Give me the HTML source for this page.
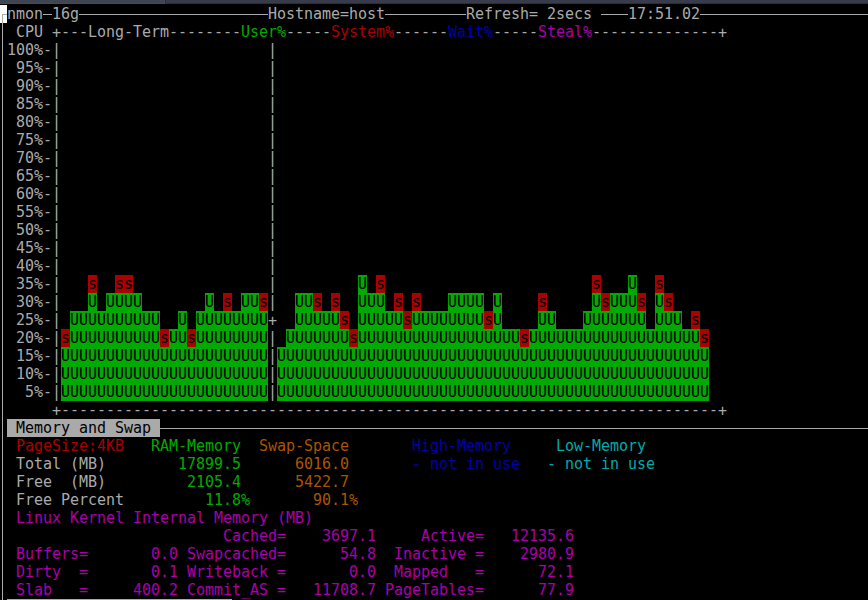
<!DOCTYPE html>
<html><head><meta charset="utf-8"><title>nmon</title>
<style>
html,body{margin:0;padding:0;background:#000;}
body{width:868px;height:600px;position:relative;overflow:hidden;
font-family:"DejaVu Sans Mono","Liberation Mono",monospace;font-size:15px;line-height:18px;}
.t{position:absolute;white-space:pre;height:18px;letter-spacing:-0.031px;display:block;}
i{position:absolute;display:block;}
b{font-weight:normal;position:relative;top:1px;}
</style></head><body>
<i style="left:0px;top:0px;width:165px;height:4px;background:#404552"></i>
<i style="left:0px;top:3px;width:165px;height:1px;background:#454a59"></i>
<i style="left:164px;top:0px;width:1px;height:4px;background:#454a59"></i>
<i style="left:165px;top:0px;width:1px;height:4px;background:#2b2e39"></i>
<i style="left:166px;top:0px;width:702px;height:3px;background:#383c4a"></i>
<i style="left:166px;top:3px;width:702px;height:1px;background:#2b2e39"></i>
<i style="left:0px;top:5px;width:7px;height:18px;background:#ffffff"></i>
<i style="left:2px;top:14px;width:1px;height:586px;background:#aaaaaa"></i>
<i style="left:2px;top:14px;width:5px;height:1px;background:#aaaaaa"></i>
<span class="t" style="left:7px;top:5px;color:#aaaaaa;">nmon</span>
<i style="left:43px;top:14px;width:9px;height:1px;background:#aaaaaa"></i>
<span class="t" style="left:52px;top:5px;color:#aaaaaa;">16g</span>
<i style="left:79px;top:14px;width:189px;height:1px;background:#aaaaaa"></i>
<span class="t" style="left:268px;top:5px;color:#aaaaaa;">Hostname=host</span>
<i style="left:385px;top:14px;width:81px;height:1px;background:#aaaaaa"></i>
<span class="t" style="left:466px;top:5px;color:#aaaaaa;">Refresh= 2secs</span>
<i style="left:601px;top:14px;width:27px;height:1px;background:#aaaaaa"></i>
<span class="t" style="left:628px;top:5px;color:#aaaaaa;">17:51.02</span>
<i style="left:700px;top:14px;width:171px;height:1px;background:#aaaaaa"></i>
<span class="t" style="left:16px;top:23px;color:#aaaaaa;">CPU <b>+</b>---Long-Term--------</span>
<span class="t" style="left:241px;top:23px;color:#00aa00;">User%</span>
<span class="t" style="left:286px;top:23px;color:#aaaaaa;">-----</span>
<span class="t" style="left:331px;top:23px;color:#aa0000;">System%</span>
<span class="t" style="left:394px;top:23px;color:#aaaaaa;">------</span>
<span class="t" style="left:448px;top:23px;color:#0000aa;">Wait%</span>
<span class="t" style="left:493px;top:23px;color:#aaaaaa;">-----</span>
<span class="t" style="left:538px;top:23px;color:#aa00aa;">Steal%</span>
<span class="t" style="left:592px;top:23px;color:#aaaaaa;">--------------<b>+</b></span>
<span class="t" style="left:7px;top:41px;color:#aaaaaa;">100%-|</span>
<span class="t" style="left:268px;top:41px;color:#aaaaaa;">|</span>
<span class="t" style="left:7px;top:59px;color:#aaaaaa;"> 95%-|</span>
<span class="t" style="left:268px;top:59px;color:#aaaaaa;">|</span>
<span class="t" style="left:7px;top:77px;color:#aaaaaa;"> 90%-|</span>
<span class="t" style="left:268px;top:77px;color:#aaaaaa;">|</span>
<span class="t" style="left:7px;top:95px;color:#aaaaaa;"> 85%-|</span>
<span class="t" style="left:268px;top:95px;color:#aaaaaa;">|</span>
<span class="t" style="left:7px;top:113px;color:#aaaaaa;"> 80%-|</span>
<span class="t" style="left:268px;top:113px;color:#aaaaaa;">|</span>
<span class="t" style="left:7px;top:131px;color:#aaaaaa;"> 75%-|</span>
<span class="t" style="left:268px;top:131px;color:#aaaaaa;">|</span>
<span class="t" style="left:7px;top:149px;color:#aaaaaa;"> 70%-|</span>
<span class="t" style="left:268px;top:149px;color:#aaaaaa;">|</span>
<span class="t" style="left:7px;top:167px;color:#aaaaaa;"> 65%-|</span>
<span class="t" style="left:268px;top:167px;color:#aaaaaa;">|</span>
<span class="t" style="left:7px;top:185px;color:#aaaaaa;"> 60%-|</span>
<span class="t" style="left:268px;top:185px;color:#aaaaaa;">|</span>
<span class="t" style="left:7px;top:203px;color:#aaaaaa;"> 55%-|</span>
<span class="t" style="left:268px;top:203px;color:#aaaaaa;">|</span>
<span class="t" style="left:7px;top:221px;color:#aaaaaa;"> 50%-|</span>
<span class="t" style="left:268px;top:221px;color:#aaaaaa;">|</span>
<span class="t" style="left:7px;top:239px;color:#aaaaaa;"> 45%-|</span>
<span class="t" style="left:268px;top:239px;color:#aaaaaa;">|</span>
<span class="t" style="left:7px;top:257px;color:#aaaaaa;"> 40%-|</span>
<span class="t" style="left:268px;top:257px;color:#aaaaaa;">|</span>
<span class="t" style="left:7px;top:275px;color:#aaaaaa;"> 35%-|</span>
<span class="t" style="left:268px;top:275px;color:#aaaaaa;">|</span>
<span class="t" style="left:88px;top:275px;color:#000;background:#aa0000;width:9px;">s</span>
<span class="t" style="left:115px;top:275px;color:#000;background:#aa0000;width:18px;">ss</span>
<span class="t" style="left:358px;top:275px;color:#000;background:#00aa00;width:9px;">U</span>
<span class="t" style="left:376px;top:275px;color:#000;background:#aa0000;width:9px;">s</span>
<span class="t" style="left:592px;top:275px;color:#000;background:#aa0000;width:9px;">s</span>
<span class="t" style="left:628px;top:275px;color:#000;background:#00aa00;width:9px;">U</span>
<span class="t" style="left:655px;top:275px;color:#000;background:#aa0000;width:9px;">s</span>
<span class="t" style="left:7px;top:293px;color:#aaaaaa;"> 30%-|</span>
<span class="t" style="left:268px;top:293px;color:#aaaaaa;">|</span>
<span class="t" style="left:88px;top:293px;color:#000;background:#00aa00;width:9px;">U</span>
<span class="t" style="left:106px;top:293px;color:#000;background:#00aa00;width:36px;">UUUU</span>
<span class="t" style="left:205px;top:293px;color:#000;background:#00aa00;width:9px;">U</span>
<span class="t" style="left:223px;top:293px;color:#000;background:#aa0000;width:9px;">s</span>
<span class="t" style="left:241px;top:293px;color:#000;background:#00aa00;width:18px;">UU</span>
<span class="t" style="left:259px;top:293px;color:#000;background:#aa0000;width:9px;">s</span>
<span class="t" style="left:295px;top:293px;color:#000;background:#00aa00;width:18px;">UU</span>
<span class="t" style="left:313px;top:293px;color:#000;background:#aa0000;width:9px;">s</span>
<span class="t" style="left:331px;top:293px;color:#000;background:#aa0000;width:9px;">s</span>
<span class="t" style="left:358px;top:293px;color:#000;background:#00aa00;width:27px;">UUU</span>
<span class="t" style="left:394px;top:293px;color:#000;background:#aa0000;width:9px;">s</span>
<span class="t" style="left:412px;top:293px;color:#000;background:#aa0000;width:9px;">s</span>
<span class="t" style="left:448px;top:293px;color:#000;background:#00aa00;width:36px;">UUUU</span>
<span class="t" style="left:493px;top:293px;color:#000;background:#00aa00;width:9px;">U</span>
<span class="t" style="left:538px;top:293px;color:#000;background:#aa0000;width:9px;">s</span>
<span class="t" style="left:592px;top:293px;color:#000;background:#00aa00;width:9px;">U</span>
<span class="t" style="left:601px;top:293px;color:#000;background:#aa0000;width:9px;">s</span>
<span class="t" style="left:610px;top:293px;color:#000;background:#00aa00;width:27px;">UUU</span>
<span class="t" style="left:637px;top:293px;color:#000;background:#aa0000;width:9px;">s</span>
<span class="t" style="left:655px;top:293px;color:#000;background:#00aa00;width:9px;">U</span>
<span class="t" style="left:664px;top:293px;color:#000;background:#aa0000;width:9px;">s</span>
<span class="t" style="left:7px;top:311px;color:#aaaaaa;"> 25%-|</span>
<span class="t" style="left:268px;top:311px;color:#aaaaaa;"><b>+</b></span>
<span class="t" style="left:70px;top:311px;color:#000;background:#00aa00;width:90px;">UUUUUUUUUU</span>
<span class="t" style="left:178px;top:311px;color:#000;background:#00aa00;width:9px;">U</span>
<span class="t" style="left:196px;top:311px;color:#000;background:#00aa00;width:72px;">UUUUUUUU</span>
<span class="t" style="left:295px;top:311px;color:#000;background:#00aa00;width:45px;">UUUUU</span>
<span class="t" style="left:340px;top:311px;color:#000;background:#aa0000;width:9px;">s</span>
<span class="t" style="left:358px;top:311px;color:#000;background:#00aa00;width:45px;">UUUUU</span>
<span class="t" style="left:403px;top:311px;color:#000;background:#aa0000;width:9px;">s</span>
<span class="t" style="left:412px;top:311px;color:#000;background:#00aa00;width:72px;">UUUUUUUU</span>
<span class="t" style="left:484px;top:311px;color:#000;background:#aa0000;width:9px;">s</span>
<span class="t" style="left:493px;top:311px;color:#000;background:#00aa00;width:9px;">U</span>
<span class="t" style="left:538px;top:311px;color:#000;background:#00aa00;width:18px;">UU</span>
<span class="t" style="left:583px;top:311px;color:#000;background:#00aa00;width:63px;">UUUUUUU</span>
<span class="t" style="left:655px;top:311px;color:#000;background:#00aa00;width:27px;">UUU</span>
<span class="t" style="left:691px;top:311px;color:#000;background:#aa0000;width:9px;">s</span>
<span class="t" style="left:7px;top:329px;color:#aaaaaa;"> 20%-|</span>
<span class="t" style="left:268px;top:329px;color:#aaaaaa;">|</span>
<span class="t" style="left:61px;top:329px;color:#000;background:#aa0000;width:9px;">s</span>
<span class="t" style="left:70px;top:329px;color:#000;background:#00aa00;width:90px;">UUUUUUUUUU</span>
<span class="t" style="left:160px;top:329px;color:#000;background:#aa0000;width:9px;">s</span>
<span class="t" style="left:169px;top:329px;color:#000;background:#00aa00;width:18px;">UU</span>
<span class="t" style="left:187px;top:329px;color:#000;background:#aa0000;width:9px;">s</span>
<span class="t" style="left:196px;top:329px;color:#000;background:#00aa00;width:72px;">UUUUUUUU</span>
<span class="t" style="left:286px;top:329px;color:#000;background:#00aa00;width:63px;">UUUUUUU</span>
<span class="t" style="left:349px;top:329px;color:#000;background:#aa0000;width:9px;">s</span>
<span class="t" style="left:358px;top:329px;color:#000;background:#00aa00;width:162px;">UUUUUUUUUUUUUUUUUU</span>
<span class="t" style="left:520px;top:329px;color:#000;background:#aa0000;width:9px;">s</span>
<span class="t" style="left:529px;top:329px;color:#000;background:#00aa00;width:171px;">UUUUUUUUUUUUUUUUUUU</span>
<span class="t" style="left:700px;top:329px;color:#000;background:#aa0000;width:9px;">s</span>
<span class="t" style="left:7px;top:347px;color:#aaaaaa;"> 15%-|</span>
<span class="t" style="left:268px;top:347px;color:#aaaaaa;">|</span>
<span class="t" style="left:61px;top:347px;color:#000;background:#00aa00;width:207px;">UUUUUUUUUUUUUUUUUUUUUUU</span>
<span class="t" style="left:277px;top:347px;color:#000;background:#00aa00;width:432px;">UUUUUUUUUUUUUUUUUUUUUUUUUUUUUUUUUUUUUUUUUUUUUUUU</span>
<span class="t" style="left:7px;top:365px;color:#aaaaaa;"> 10%-|</span>
<span class="t" style="left:268px;top:365px;color:#aaaaaa;">|</span>
<span class="t" style="left:61px;top:365px;color:#000;background:#00aa00;width:207px;">UUUUUUUUUUUUUUUUUUUUUUU</span>
<span class="t" style="left:277px;top:365px;color:#000;background:#00aa00;width:432px;">UUUUUUUUUUUUUUUUUUUUUUUUUUUUUUUUUUUUUUUUUUUUUUUU</span>
<span class="t" style="left:7px;top:383px;color:#aaaaaa;">  5%-|</span>
<span class="t" style="left:268px;top:383px;color:#aaaaaa;">|</span>
<span class="t" style="left:61px;top:383px;color:#000;background:#00aa00;width:207px;">UUUUUUUUUUUUUUUUUUUUUUU</span>
<span class="t" style="left:277px;top:383px;color:#000;background:#00aa00;width:432px;">UUUUUUUUUUUUUUUUUUUUUUUUUUUUUUUUUUUUUUUUUUUUUUUU</span>
<span class="t" style="left:52px;top:401px;color:#aaaaaa;"><b>+</b>-------------------------------------------------------------------------<b>+</b></span>
<span class="t" style="left:7px;top:419px;color:#000;background:#aaaaaa;width:153px;"> Memory and Swap </span>
<i style="left:160px;top:428px;width:711px;height:1px;background:#aaaaaa"></i>
<span class="t" style="left:16px;top:437px;color:#aa0000;">PageSize:4KB</span>
<span class="t" style="left:151px;top:437px;color:#00aa00;">RAM-Memory</span>
<span class="t" style="left:259px;top:437px;color:#aa5500;">Swap-Space</span>
<span class="t" style="left:412px;top:437px;color:#0000aa;">High-Memory</span>
<span class="t" style="left:556px;top:437px;color:#00aaaa;">Low-Memory</span>
<span class="t" style="left:16px;top:455px;color:#aaaaaa;">Total (MB)</span>
<span class="t" style="left:178px;top:455px;color:#00aa00;">17899.5</span>
<span class="t" style="left:295px;top:455px;color:#aa5500;">6016.0</span>
<span class="t" style="left:412px;top:455px;color:#0000aa;">- not in use</span>
<span class="t" style="left:547px;top:455px;color:#00aaaa;">- not in use</span>
<span class="t" style="left:16px;top:473px;color:#aaaaaa;">Free  (MB)</span>
<span class="t" style="left:187px;top:473px;color:#00aa00;">2105.4</span>
<span class="t" style="left:295px;top:473px;color:#aa5500;">5422.7</span>
<span class="t" style="left:16px;top:491px;color:#aaaaaa;">Free Percent</span>
<span class="t" style="left:205px;top:491px;color:#00aa00;">11.8%</span>
<span class="t" style="left:313px;top:491px;color:#aa5500;">90.1%</span>
<span class="t" style="left:16px;top:509px;color:#aa00aa;">Linux Kernel Internal Memory (MB)</span>
<span class="t" style="left:223px;top:527px;color:#aa00aa;">Cached=</span>
<span class="t" style="left:322px;top:527px;color:#aa00aa;">3697.1</span>
<span class="t" style="left:421px;top:527px;color:#aa00aa;">Active=</span>
<span class="t" style="left:511px;top:527px;color:#aa00aa;">12135.6</span>
<span class="t" style="left:16px;top:545px;color:#aa00aa;">Buffers=</span>
<span class="t" style="left:151px;top:545px;color:#aa00aa;">0.0 Swapcached=</span>
<span class="t" style="left:340px;top:545px;color:#aa00aa;">54.8</span>
<span class="t" style="left:394px;top:545px;color:#aa00aa;">Inactive =</span>
<span class="t" style="left:520px;top:545px;color:#aa00aa;">2980.9</span>
<span class="t" style="left:16px;top:563px;color:#aa00aa;">Dirty  =</span>
<span class="t" style="left:151px;top:563px;color:#aa00aa;">0.1 Writeback =</span>
<span class="t" style="left:349px;top:563px;color:#aa00aa;">0.0</span>
<span class="t" style="left:394px;top:563px;color:#aa00aa;">Mapped   =</span>
<span class="t" style="left:538px;top:563px;color:#aa00aa;">72.1</span>
<span class="t" style="left:16px;top:581px;color:#aa00aa;">Slab   =</span>
<span class="t" style="left:133px;top:581px;color:#aa00aa;">400.2 Commit_AS =</span>
<span class="t" style="left:313px;top:581px;color:#aa00aa;">11708.7 PageTables=</span>
<span class="t" style="left:538px;top:581px;color:#aa00aa;">77.9</span>
<i style="left:7px;top:599px;width:225px;height:1px;background:#aaaaaa"></i>
</body></html>
